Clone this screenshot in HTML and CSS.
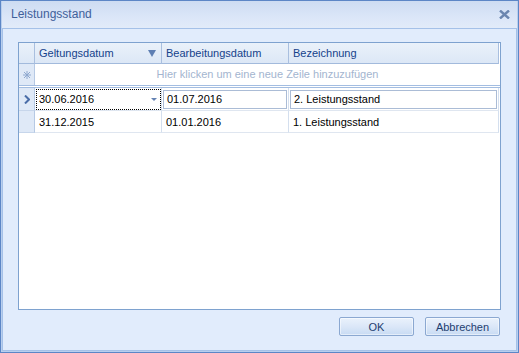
FILE: index.html
```
<!DOCTYPE html>
<html lang="de">

<head>
  <meta charset="UTF-8" />
  <meta name="viewport" content="width=device-width, initial-scale=1.0" />
  <title>Leistungsstand</title>
  <link rel="stylesheet" href="styles.css">
</head>

<body>
  <div class="window">
    <div class="titlebar">
      <span class="title">Leistungsstand</span>
      <svg class="close" width="11" height="9" viewBox="0 0 11 9">
        <path d="M1 0.5 L10 8.5 M10 0.5 L1 8.5" stroke="#6b86af" stroke-width="2.4" />
      </svg>
    </div>

    <div class="content">
      <div class="grid">
        <!-- header -->
        <div class="row head">
          <div class="ind corner"></div>
          <div class="cell">
            <span>Geltungsdatum</span>
            <svg class="filter" width="8" height="7" viewBox="0 0 8 7">
              <polygon points="0,0 8,0 4,7" fill="#5e7fb3" />
            </svg>
          </div>
          <div class="cell">Bearbeitungsdatum</div>
          <div class="cell last">Bezeichnung</div>
        </div>

        <!-- new row -->
        <div class="row newrow">
          <div class="ind">
            <svg width="8" height="8" viewBox="0 0 8 8">
              <path d="M4 0 V8 M0 4 H8 M1 1 L7 7 M7 1 L1 7" stroke="#8ea8cf" stroke-width="1" />
            </svg>
          </div>
          <div class="hint">Hier klicken um eine neue Zeile hinzuzufügen</div>
        </div>

        <!-- data rows -->
        <div class="row data current">
          <div class="ind">
            <svg width="6" height="9" viewBox="0 0 6 9">
              <polyline points="1,0.5 5,4.5 1,8.5" fill="none" stroke="#4a6da8" stroke-width="2" />
            </svg>
          </div>
          <div class="cell focus">
            <span>30.06.2016</span>
            <svg class="drop" width="6" height="3" viewBox="0 0 6 3">
              <polygon points="0,0 6,0 3,3" fill="#6482b3" />
            </svg>
          </div>
          <div class="cell"><div class="editor">01.07.2016</div></div>
          <div class="cell last"><div class="editor">2. Leistungsstand</div></div>
        </div>
        <div class="row data">
          <div class="ind"></div>
          <div class="cell">31.12.2015</div>
          <div class="cell">01.01.2016</div>
          <div class="cell last">1. Leistungsstand</div>
        </div>
      </div>

      <div class="buttons">
        <button class="btn">OK</button>
        <button class="btn">Abbrechen</button>
      </div>
    </div>
  </div>
</body>

</html>
```

FILE: styles.css
```
* {
  box-sizing: border-box;
}

body {
  margin: 0;
  font-family: "Liberation Sans", Arial, sans-serif;
  font-size: 11px;
}

.window {
  display: flex;
  flex-direction: column;
  width: 519px;
  height: 353px;
  border: 1px solid #5c86c6;
  padding: 0 1px 1px 1px;
  background: #b9cfee;
}

.titlebar {
  display: flex;
  align-items: center;
  justify-content: space-between;
  height: 27px;
  padding: 0 7px 0 9px;
  background: linear-gradient(to bottom, #cddcf2, #dbe6f8 60%, #e2ebf9);
}

.title {
  font-size: 12px;
  color: #3f609a;
  padding-bottom: 1px;
}

.close {
  margin-top: -1px;
}

.content {
  flex: 1;
  display: flex;
  flex-direction: column;
  border: 1px solid #a5c1e8;
  background: #e1ecfc;
  padding: 13px 15px 0 15px;
}

.grid {
  height: 268px;
  border: 1px solid #7ea2cf;
  background: #fff;
}

.row {
  display: grid;
  grid-template-columns: 16px 127px 127px 210px;
}

.ind {
  display: flex;
  align-items: center;
  justify-content: center;
  border-right: 1px solid #b6c9e4;
  background: #dfe9f7;
}

.cell {
  display: flex;
  align-items: center;
  padding-left: 4px;
  border-right: 1px solid #d4dfee;
  border-bottom: 1px solid #dfe6f0;
  color: #000;
}

.head {
  height: 21px;
}

.head .cell,
.head .corner {
  background: linear-gradient(to bottom, #eaf1fa, #dce7f6);
  border-right: 1px solid #a9bfdf;
  border-bottom: 1px solid #a2badc;
  color: #15428b;
}

.head .cell {
  justify-content: space-between;
  padding-right: 5px;
}

.head .cell.last {
  border-right: 1px solid #a9bfdf;
}

.newrow {
  height: 24px;
  border-bottom: 3px double #a3bde1;
  grid-template-columns: 16px 465px;
}

.newrow .ind {
  border-bottom: 0;
}

.hint {
  display: flex;
  align-items: center;
  justify-content: center;
  color: #a3b5cf;
  padding-bottom: 1px;
}

.data {
  height: 22px;
}

.data.current {
  height: 23px;
}

.data .ind {
  border-bottom: 1px solid #c7d6eb;
}

.focus {
  justify-content: space-between;
  padding-right: 4px;
  outline: 1px dotted #000;
  outline-offset: -2px;
}

.drop {
  margin-top: 1px;
}

.current .cell:not(.focus) {
  padding: 1px;
}

.editor {
  display: flex;
  align-items: center;
  width: 100%;
  height: 19px;
  padding-left: 3px;
  border: 1px solid #abbcd6;
}

.buttons {
  display: flex;
  justify-content: flex-end;
  gap: 11px;
  padding: 7px 1px 0 0;
}

.btn {
  width: 75px;
  height: 19px;
  padding: 0;
  border: 1px solid #8ba8d1;
  border-radius: 2px;
  background: linear-gradient(to bottom, #eaf2fc, #dbe7f8 50%, #c8dbf3);
  box-shadow: inset 0 0 0 1px rgba(255, 255, 255, .5);
  font-family: "Liberation Sans", Arial, sans-serif;
  font-size: 11px;
  color: #1e3e70;
}
```
